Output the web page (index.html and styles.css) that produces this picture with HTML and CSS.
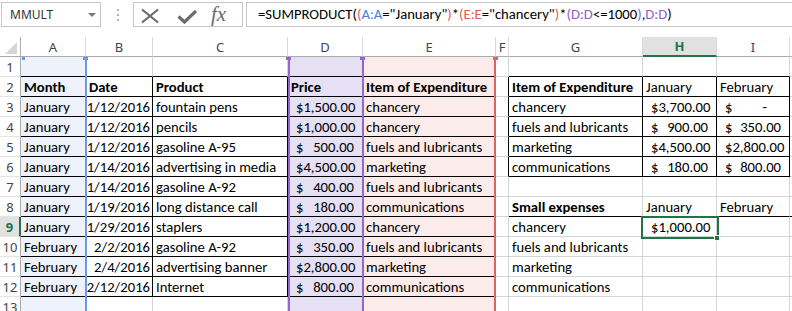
FILE: index.html
```html
<!DOCTYPE html>
<html lang="en">
<head>
  <meta charset="UTF-8" />
  <title>SUMPRODUCT small expenses</title>
  <link rel="stylesheet" href="styles.css">
</head>
<body>

<div class="toolbar">
  <div class="namebox"><span>MMULT</span><i class="caret"></i></div>
  <div class="grip"><i></i><i></i><i></i></div>
  <div class="fbtns">
    <svg class="ico-x" width="20" height="16" viewBox="0 0 20 16"><path d="M2 1.5 L18 14.5 M18 1.5 L2 14.5" stroke="#6b6b6b" stroke-width="2.2" fill="none"/></svg>
    <svg class="ico-ok" width="20" height="14" viewBox="0 0 20 14"><path d="M1.5 6.5 L7.5 12 L19 1" stroke="#6b6b6b" stroke-width="3.2" fill="none"/></svg>
    <span class="fx">fx</span>
  </div>
  <div class="formula">=SUMPRODUCT(<span class="fr">(</span><span class="fb">A:A</span>="January"<span class="fr">)</span>*<span class="fr">(E:E</span>="chancery"<span class="fr">)</span>*<span class="fp">(D:D</span>&lt;=1000<span class="fp">)</span>,<span class="fp">D:D</span>)</div>
</div>

<div class="sheet">
  <!-- column headers -->
  <div class="h corner"><i class="tri"></i></div>
  <div class="h">A</div><div class="h">B</div><div class="h">C</div><div class="h">D</div>
  <div class="h">E</div><div class="h">F</div><div class="h">G</div>
  <div class="h sel-col">H</div><div class="h">I</div><div class="h"></div>

  <!-- 1 -->
  <div class="r">1</div>
  <div class="c ra bb"></div><div class="c bb"></div><div class="c bb"></div>
  <div class="c rd bb"></div><div class="c re bb"></div><div class="c"></div>
  <div class="c bb"></div><div class="c bb"></div><div class="c bb"></div><div class="c"></div>

  <!-- 2 -->
  <div class="r">2</div>
  <div class="c ra bb br b">Month</div>
  <div class="c bb br b">Date</div>
  <div class="c bb br b">Product</div>
  <div class="c rd bb br b">Price</div>
  <div class="c re bb br b">Item of Expenditure</div>
  <div class="c br"></div>
  <div class="c bb br b">Item of Expenditure</div>
  <div class="c bb br">January</div>
  <div class="c bb br">February</div>
  <div class="c"></div>

  <!-- 3 -->
  <div class="r">3</div>
  <div class="c ra bb br">January</div>
  <div class="c bb br num">1/12/2016</div>
  <div class="c bb br">fountain pens</div>
  <div class="c rd bb br acc"><span>$</span><span>1,500.00</span></div>
  <div class="c re bb br">chancery</div>
  <div class="c br"></div>
  <div class="c bb br">chancery</div>
  <div class="c bb br acc"><span>$</span><span>3,700.00</span></div>
  <div class="c bb br acc"><span>$</span><span class="dash">-</span></div>
  <div class="c"></div>

  <!-- 4 -->
  <div class="r">4</div>
  <div class="c ra bb br">January</div>
  <div class="c bb br num">1/12/2016</div>
  <div class="c bb br">pencils</div>
  <div class="c rd bb br acc"><span>$</span><span>1,000.00</span></div>
  <div class="c re bb br">chancery</div>
  <div class="c br"></div>
  <div class="c bb br">fuels and lubricants</div>
  <div class="c bb br acc"><span>$</span><span>900.00</span></div>
  <div class="c bb br acc"><span>$</span><span>350.00</span></div>
  <div class="c"></div>

  <!-- 5 -->
  <div class="r">5</div>
  <div class="c ra bb br">January</div>
  <div class="c bb br num">1/12/2016</div>
  <div class="c bb br">gasoline A-95</div>
  <div class="c rd bb br acc"><span>$</span><span>500.00</span></div>
  <div class="c re bb br">fuels and lubricants</div>
  <div class="c br"></div>
  <div class="c bb br">marketing</div>
  <div class="c bb br acc"><span>$</span><span>4,500.00</span></div>
  <div class="c bb br acc"><span>$</span><span>2,800.00</span></div>
  <div class="c"></div>

  <!-- 6 -->
  <div class="r">6</div>
  <div class="c ra bb br">January</div>
  <div class="c bb br num">1/14/2016</div>
  <div class="c bb br">advertising in media</div>
  <div class="c rd bb br acc"><span>$</span><span>4,500.00</span></div>
  <div class="c re bb br">marketing</div>
  <div class="c br"></div>
  <div class="c bb br">communications</div>
  <div class="c bb br acc"><span>$</span><span>180.00</span></div>
  <div class="c bb br acc"><span>$</span><span>800.00</span></div>
  <div class="c"></div>

  <!-- 7 -->
  <div class="r">7</div>
  <div class="c ra bb br">January</div>
  <div class="c bb br num">1/14/2016</div>
  <div class="c bb br">gasoline A-92</div>
  <div class="c rd bb br acc"><span>$</span><span>400.00</span></div>
  <div class="c re bb br">fuels and lubricants</div>
  <div class="c"></div><div class="c"></div><div class="c"></div><div class="c"></div><div class="c"></div>

  <!-- 8 -->
  <div class="r">8</div>
  <div class="c ra bb br">January</div>
  <div class="c bb br num">1/19/2016</div>
  <div class="c bb br">long distance call</div>
  <div class="c rd bb br acc"><span>$</span><span>180.00</span></div>
  <div class="c re bb br">communications</div>
  <div class="c"></div>
  <div class="c bb b">Small expenses</div>
  <div class="c bb">January</div>
  <div class="c bb">February</div>
  <div class="c bb"></div>

  <!-- 9 -->
  <div class="r sel-row">9</div>
  <div class="c ra bb br">January</div>
  <div class="c bb br num">1/29/2016</div>
  <div class="c bb br">staplers</div>
  <div class="c rd bb br acc"><span>$</span><span>1,200.00</span></div>
  <div class="c re bb br">chancery</div>
  <div class="c"></div>
  <div class="c">chancery</div>
  <div class="c acc"><span>$</span><span>1,000.00</span></div>
  <div class="c"></div><div class="c"></div>

  <!-- 10 -->
  <div class="r">10</div>
  <div class="c ra bb br">February</div>
  <div class="c bb br num">2/2/2016</div>
  <div class="c bb br">gasoline A-92</div>
  <div class="c rd bb br acc"><span>$</span><span>350.00</span></div>
  <div class="c re bb br">fuels and lubricants</div>
  <div class="c"></div>
  <div class="c">fuels and lubricants</div>
  <div class="c"></div><div class="c"></div><div class="c"></div>

  <!-- 11 -->
  <div class="r">11</div>
  <div class="c ra bb br">February</div>
  <div class="c bb br num">2/4/2016</div>
  <div class="c bb br">advertising banner</div>
  <div class="c rd bb br acc"><span>$</span><span>2,800.00</span></div>
  <div class="c re bb br">marketing</div>
  <div class="c"></div>
  <div class="c">marketing</div>
  <div class="c"></div><div class="c"></div><div class="c"></div>

  <!-- 12 -->
  <div class="r">12</div>
  <div class="c ra bb br">February</div>
  <div class="c bb br num">2/12/2016</div>
  <div class="c bb br">Internet</div>
  <div class="c rd bb br acc"><span>$</span><span>800.00</span></div>
  <div class="c re bb br">communications</div>
  <div class="c"></div>
  <div class="c">communications</div>
  <div class="c"></div><div class="c"></div><div class="c"></div>

  <!-- 13 -->
  <div class="r">13</div>
  <div class="c ra"></div><div class="c"></div><div class="c"></div>
  <div class="c rd"></div><div class="c re"></div><div class="c"></div>
  <div class="c"></div><div class="c"></div><div class="c"></div><div class="c"></div>

  <!-- formula range outlines (drawn over the grid) -->
  <div class="range range-a"></div>
  <div class="range range-d"></div>
  <div class="range range-e"></div>
  <i class="knob k-a1"></i><i class="knob k-a2"></i>
  <i class="knob k-d1"></i><i class="knob k-d2"></i>
  <i class="knob k-e2"></i>

  <!-- active cell H9 -->
  <div class="active"></div>
  <i class="fill-handle"></i>
</div>

</body>
</html>
```

FILE: styles.css
```css
* {
  margin: 0;
  padding: 0;
  box-sizing: border-box;
}

body {
  width: 792px;
  height: 311px;
  overflow: hidden;
  background: #fff;
  font-family: Carlito, Calibri, Lato, sans-serif;
}

/* Formula bar */
.toolbar {
  display: flex;
  align-items: flex-start;
  height: 37px;
  padding: 2px 0 0 1px;
}

.namebox {
  width: 100px;
  height: 25px;
  border: 1px solid #c6c6c6;
  display: flex;
  align-items: center;
  justify-content: space-between;
  padding: 0 4px 0 8px;
  font-family: "Noto Sans", sans-serif;
  font-size: 12px;
  color: #333;
}

.caret {
  width: 0;
  height: 0;
  border-left: 4px solid transparent;
  border-right: 4px solid transparent;
  border-top: 4px solid #7a7a7a;
  margin-top: 1px;
}

.grip {
  margin-left: 16px;
  height: 25px;
  display: flex;
  flex-direction: column;
  justify-content: center;
  gap: 3px;
}

.grip i {
  width: 2px;
  height: 2px;
  background: #b4b4b4;
}

.fbtns {
  margin-left: 14px;
  width: 110px;
  height: 25px;
  border: 1px solid #c6c6c6;
  display: flex;
  align-items: center;
  padding-left: 6px;
}

.ico-x { margin-top: 2px; }
.ico-ok { margin-left: 17px; margin-top: 4px; }

.fx {
  margin-left: 14px;
  font-family: "Liberation Serif", serif;
  font-style: italic;
  font-size: 21px;
  color: #6b6b6b;
  line-height: 1;
}

.formula {
  flex: 1;
  margin-left: 3px;
  height: 25px;
  border: 1px solid #c6c6c6;
  border-right: none;
  padding: 0 0 0 11px;
  font-size: 14.67px;
  line-height: 23px;
  white-space: nowrap;
  color: #000;
}

.fb { color: #4a7fdc; }
.fr { color: #e15b5b; }
.fp { color: #8f5fc9; }

/* Sheet grid */
.sheet {
  position: relative;
  display: grid;
  grid-template-columns: 21px 65px 67px 135px 75px 133px 13px 134px 74px 73px 1fr;
  grid-auto-rows: 20px;
}

.h {
  border-right: 1px solid #d9d9d9;
  border-bottom: 1px solid #ababab;
  display: flex;
  align-items: center;
  justify-content: center;
  font-family: "Noto Sans", sans-serif;
  font-size: 13px;
  color: #444;
}

.corner {
  position: relative;
  border-right: 1px solid #ababab;
}

.tri {
  position: absolute;
  right: 3px;
  bottom: 2px;
  width: 0;
  height: 0;
  border-left: 12px solid transparent;
  border-bottom: 12px solid #d6d6d6;
}

.sel-col {
  background: #e1e1e1;
  color: #217346;
  font-weight: bold;
  border-bottom: 2px solid #217346;
}

.r {
  border-right: 1px solid #ababab;
  border-bottom: 1px solid #e4e4e4;
  display: flex;
  align-items: center;
  justify-content: center;
  font-family: "Noto Sans", sans-serif;
  font-size: 13px;
  color: #444;
}

.sel-row {
  background: #e1e1e1;
  color: #217346;
  font-weight: bold;
  border-right: 2px solid #217346;
}

.c {
  border-right: 1px solid #d4d4d4;
  border-bottom: 1px solid #d4d4d4;
  padding: 0 2px 0 3px;
  display: flex;
  align-items: flex-end;
  white-space: nowrap;
  font-size: 14.67px;
  line-height: 18px;
  color: #000;
}

.b { font-weight: bold; }
.num { justify-content: flex-end; }

.acc {
  justify-content: space-between;
  padding: 0 8px 0 8px;
}

.dash { padding-right: 14px; }

.bb { border-bottom-color: #000; }
.br { border-right-color: #000; }

/* formula reference colours */
.ra { background: #edf2fc; }
.rd { background: #e6e0f4; }
.re { background: #fcebeb; }

.range {
  position: absolute;
  top: 20px;
  bottom: 0;
}

.range-a {
  left: 21px;
  width: 66px;
  border-right: 2px solid #6a98e6;
}

.range-d {
  left: 288px;
  width: 76px;
  border-left: 2px solid #9466cc;
  border-right: 2px solid #9466cc;
}

.range-e {
  left: 364px;
  width: 132px;
  border-right: 2px solid #e06464;
}

.knob {
  position: absolute;
  top: 20px;
  width: 5px;
  height: 3px;
}

.k-a1 { left: 22px; width: 3px; background: #6a98e6; }
.k-a2 { left: 83px; background: #6a98e6; }
.k-d1 { left: 286px; background: #9466cc; }
.k-d2 { left: 360px; background: #9466cc; }
.k-e2 { left: 493px; background: #e06464; }

.active {
  position: absolute;
  left: 641px;
  top: 179px;
  width: 78px;
  height: 23px;
  border: 2px solid #217346;
}

.fill-handle {
  position: absolute;
  left: 714px;
  top: 198px;
  width: 6px;
  height: 6px;
  background: #217346;
  border: 1px solid #fff;
}
```
